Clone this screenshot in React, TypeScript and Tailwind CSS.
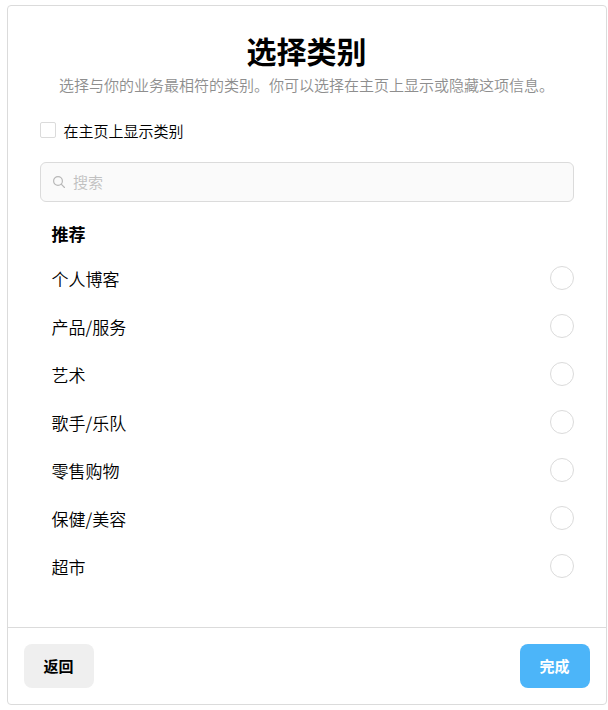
import { useState } from 'react';

const categories = [
  '个人博客',
  '产品/服务',
  '艺术',
  '歌手/乐队',
  '零售购物',
  '保健/美容',
  '超市',
];

export default function App() {
  const [selected, setSelected] = useState('');
  const [query, setQuery] = useState('');

  return (
    <div className="h-[710px] w-[608px] bg-white pt-[5px] pl-[7px] font-['Noto_Sans_CJK_SC',sans-serif] text-black">
      <div className="flex h-[700px] w-[600px] flex-col rounded-[4px] border border-[#dbdbdb]">
        <div className="flex-1 px-8 pt-6">
          <h1 className="pr-px text-center text-[30px] leading-[40px] font-bold">选择类别</h1>
          <p className="pt-[5px] pr-px text-center text-[15px] leading-5 font-[350] whitespace-nowrap text-[#8e8e8e]">
            选择与你的业务最相符的类别。你可以选择在主页上显示或隐藏这项信息。
          </p>

          <label className="mt-[27px] flex h-4 items-center gap-[7.5px]">
            <input
              type="checkbox"
              className="size-4 shrink-0 appearance-none rounded-[2px] border border-[#dbdbdb] bg-white checked:bg-[#4cb5f9]"
            />
            <span className="pt-[2px] text-[15px] leading-4 font-[350]">在主页上显示类别</span>
          </label>

          <div className="mt-6 flex h-10 items-center rounded-[6px] border border-[#dbdbdb] bg-[#fafafa] pl-3">
            <svg width="12" height="12" viewBox="0 0 12 12" fill="none" stroke="#b8b8b8" strokeWidth="1.2" className="shrink-0">
              <circle cx="5" cy="5" r="4.4" />
              <path d="M8.2 8.2l3.3 3.3" strokeLinecap="round" />
            </svg>
            <input
              value={query}
              onChange={(e) => setQuery(e.target.value)}
              placeholder="搜索"
              className="mb-0.5 ml-2 h-8 flex-1 bg-transparent text-[15px] font-[350] outline-none placeholder:text-[#c0c0c0]"
            />
          </div>

          <div className="pt-5 pl-[11.5px]">
            <h2 className="mb-2 text-[17px] leading-6 font-bold">推荐</h2>
            {categories.map((name) => (
              <button
                key={name}
                onClick={() => setSelected(name)}
                className="flex h-12 w-full items-center justify-between"
              >
                <span className="pt-px text-[17px] leading-6 font-[350]">{name}</span>
                <span
                  className={
                    selected === name
                      ? 'size-6 rounded-full border border-[#4cb5f9] bg-[#4cb5f9]'
                      : 'size-6 rounded-full border border-[#dbdbdb]'
                  }
                />
              </button>
            ))}
          </div>
        </div>

        <div className="flex h-[77px] items-center justify-between border-t border-[#dbdbdb] px-4">
          <button className="h-11 w-[70px] rounded-[8px] bg-[#efefef] pr-px text-[15px] font-bold">返回</button>
          <button className="h-11 w-[70px] rounded-[8px] bg-[#4cb5f9] pr-px text-[15px] font-bold text-white">
            完成
          </button>
        </div>
      </div>
    </div>
  );
}
